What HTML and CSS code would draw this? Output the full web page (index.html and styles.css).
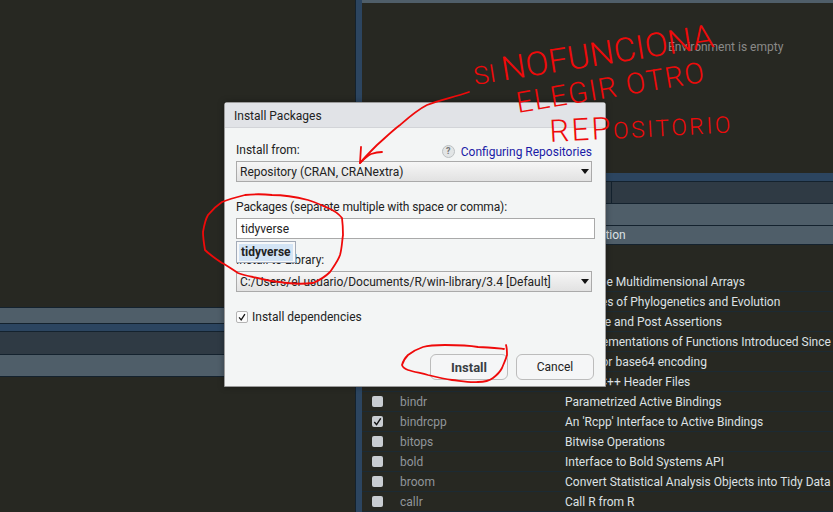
FILE: index.html
```html
<!DOCTYPE html>
<html lang="en">

<head>
    <meta charset="UTF-8">
    <title>Install Packages</title>
    <link rel="stylesheet" href="styles.css">
</head>

<body>
    <div class="left">
        <div class="left-top"></div>
        <div class="band band-a"></div>
        <div class="strip"></div>
        <div class="tabs-left"></div>
        <div class="band band-b"></div>
        <div class="left-bottom"></div>
    </div>

    <div class="divider"></div>

    <div class="right">
        <div class="top-bar"></div>
        <div class="env">Environment is empty</div>
        <div class="strip strip-right"></div>
        <div class="tabs">
            <div class="tab"></div>
        </div>
        <div class="band toolbar"></div>
        <div class="row-grid table-head">
            <span></span>
            <span>Name</span>
            <span>Description</span>
        </div>
        <div class="rows">
            <div class="row-grid row"><i class="check"></i><span class="name">abind</span><span>Combine Multidimensional Arrays</span></div>
            <div class="row-grid row"><i class="check"></i><span class="name">ape</span><span>Analyses of Phylogenetics and Evolution</span></div>
            <div class="row-grid row"><i class="check"></i><span class="name">assertthat</span><span>Easy Pre and Post Assertions</span></div>
            <div class="row-grid row"><i class="check"></i><span class="name">backports</span><span>Reimplementations of Functions Introduced Since</span></div>
            <div class="row-grid row"><i class="check"></i><span class="name">base64enc</span><span>Tools for base64 encoding</span></div>
            <div class="row-grid row"><i class="check"></i><span class="name">BH</span><span>Boost C++ Header Files</span></div>
            <div class="row-grid row"><i class="check"></i><span class="name">bindr</span><span>Parametrized Active Bindings</span></div>
            <div class="row-grid row">
                <i class="check">
                    <svg viewBox="0 0 12 12"><path d="M2.5 6.5 L5 9.5 L9.5 2.5" /></svg>
                </i>
                <span class="name">bindrcpp</span><span>An 'Rcpp' Interface to Active Bindings</span>
            </div>
            <div class="row-grid row"><i class="check"></i><span class="name">bitops</span><span>Bitwise Operations</span></div>
            <div class="row-grid row"><i class="check"></i><span class="name">bold</span><span>Interface to Bold Systems API</span></div>
            <div class="row-grid row"><i class="check"></i><span class="name">broom</span><span>Convert Statistical Analysis Objects into Tidy Data Frames</span></div>
            <div class="row-grid row"><i class="check"></i><span class="name">callr</span><span>Call R from R</span></div>
        </div>
    </div>

    <div class="dialog">
        <div class="dialog-title">Install Packages</div>
        <div class="dialog-body">
            <div class="label-row">
                <span>Install from:</span>
                <span class="help"><b class="help-icon">?</b><a href="#">Configuring Repositories</a></span>
            </div>
            <div class="select">Repository (CRAN, CRANextra)</div>

            <div class="label pkg-label">Packages (separate multiple with space or comma):</div>
            <div class="input">tidyverse</div>
            <div class="suggest"><span>tidyverse</span></div>

            <div class="label lib-label">Install to Library:</div>
            <div class="select">C:/Users/el usuario/Documents/R/win-library/3.4 [Default]</div>

            <div class="deps">
                <i class="check check-light">
                    <svg viewBox="0 0 12 12"><path d="M2.5 6.5 L5 9.5 L9.5 2.5" /></svg>
                </i>
                <span>Install dependencies</span>
            </div>

            <div class="buttons">
                <button class="btn btn-main">Install</button>
                <button class="btn">Cancel</button>
            </div>
        </div>
    </div>

    <svg class="marks" viewBox="0 0 833 512">
        <text class="hand" x="475" y="85" textLength="243" lengthAdjust="spacingAndGlyphs" transform="rotate(-9 475 85)">SI <tspan class="hand-big">NOFUNCIONA</tspan></text>
        <text class="hand hand-two" x="518" y="113" textLength="190" transform="rotate(-9.5 518 113)">ELEGIR OTRO</text>
        <text class="hand hand-three" x="550" y="142" textLength="181" transform="rotate(-3 550 142)"><tspan class="hand-rep">REP</tspan>OSITORIO</text>

        <path d="M469 92 C455 97 440 100 427 105 C417 110 408 118 400 125 C392 131 385 138 377 145 C371 151 365 157 360 163" />
        <path d="M361 147 L360 163 C364 159 367 156 371 154 C374 153 378 152 382 152" />
        <path d="M342 218 C338 213 333 210 328 208 C321 205 315 202 308 200 C296 197 284 195 272 195 C263 194 254 194 245 195 C237 197 229 199 222 202 C216 206 212 210 208 215 C205 220 204 226 203 232 C203 238 204 244 205 250 C210 255 216 259 222 263 C228 266 233 270 238 273 C243 275 248 276 253 277 C264 280 276 282 287 283 C296 284 305 284 313 283 C320 280 326 276 330 272 C334 266 338 261 340 255 C342 248 342 241 343 235 C343 231 343 226 342 218" />
        <path d="M504 349 C495 348 487 347 478 347 C467 345 456 345 445 345 C437 345 430 345 423 347 C417 349 412 352 408 355 C405 358 403 361 402 365 C403 368 405 369 408 370 C414 372 421 373 428 375 C436 377 444 379 452 380 C461 381 470 383 478 382 C484 382 489 381 493 378 C497 375 500 372 502 368 C504 363 506 359 507 355 C507 351 507 348 506 345" />
    </svg>
</body>

</html>
```
FILE: styles.css
```css
* {
    box-sizing: border-box;
    margin: 0;
    padding: 0;
}

body {
    display: flex;
    width: 833px;
    height: 512px;
    overflow: hidden;
    background-color: #272822;
    font-family: Roboto, sans-serif;
    font-size: 12px;
}

/* left side panes */
.left {
    display: flex;
    flex-direction: column;
    flex: none;
    width: 355px;
    height: 100%;
}

.left-top {
    height: 307px;
}

.band {
    background-color: #4f5e69;
    border-top: 1px solid #14222e;
}

.band-a {
    height: 16px;
}

.strip {
    height: 8px;
    background-color: #2c4560;
    border-top: 1px solid #14222e;
}

.tabs-left {
    height: 23px;
    background-color: #2f3a44;
    border-top: 1px solid #14222e;
}

.band-b {
    height: 23px;
    border-bottom: 1px solid #14222e;
}

.divider {
    flex: none;
    width: 7px;
    height: 100%;
    background-color: #2c4560;
    border-left: 1px solid #14222e;
}

/* right side */
.right {
    display: flex;
    flex-direction: column;
    flex: 1;
    min-width: 0;
    height: 100%;
    overflow: hidden;
    color: #dde1e4;
}

.top-bar {
    height: 3px;
    background-color: #4f5e69;
}

.env {
    height: 170px;
    padding: 37px 0 0 306px;
    color: #8a8a88;
}

.strip-right {
    height: 8px;
    border-top: 0;
}

.tabs {
    height: 23px;
    background-color: #2f3a44;
    border-top: 1px solid #14222e;
    border-bottom: 1px solid #14222e;
}

.tab {
    width: 250px;
    height: 100%;
    border-right: 1px solid #14222e;
}

.toolbar {
    height: 22px;
    border-top: 0;
    border-bottom: 1px solid #14222e;
}

.row-grid {
    display: grid;
    grid-template-columns: 38px 165px 1fr;
    align-items: center;
    white-space: nowrap;
}

.table-head {
    height: 19px;
    background-color: #4f5e69;
    border-bottom: 1px solid #14222e;
}

.rows {
    padding-top: 27px;
}

.row {
    height: 20px;
    border-bottom: 1px solid #1c2a33;
}

.name {
    color: #91969b;
}

.check {
    display: block;
    width: 11px;
    height: 11px;
    margin-left: 10px;
    background-color: #c9cdd2;
    border-radius: 2px;
}

.check svg {
    display: block;
    width: 11px;
    height: 11px;
}

.check path {
    fill: none;
    stroke: #111111;
    stroke-width: 1.5;
}

/* dialog */
.dialog {
    position: absolute;
    left: 224px;
    top: 102px;
    display: flex;
    flex-direction: column;
    width: 382px;
    height: 285px;
    color: #222222;
    background-color: #f3f5f5;
    border: 1px solid #9b9b9b;
    border-radius: 3px 3px 0 0;
    box-shadow: 0 0 6px rgba(0, 0, 0, 0.35);
}

.dialog-title {
    height: 25px;
    padding: 6px 0 0 9px;
    background-color: #e1e3e7;
    border-bottom: 1px solid #d2d4d8;
}

.dialog-body {
    position: relative;
    padding: 15px 13px 0 11px;
}

.label-row {
    display: flex;
    justify-content: space-between;
    height: 18px;
}

.help {
    display: flex;
    gap: 6px;
    align-items: center;
    height: 17px;
}

.help a {
    color: #1a1aa6;
    text-decoration: none;
}

.help-icon {
    width: 13px;
    height: 13px;
    color: #777777;
    font-size: 9px;
    line-height: 11px;
    text-align: center;
    background-color: #e2e5e6;
    border: 1px solid #bcc0c2;
    border-radius: 50%;
}

.select {
    display: flex;
    align-items: center;
    width: 356px;
    height: 21px;
    padding-left: 3px;
    background: linear-gradient(#f6f6f6, #e2e2e2);
    border: 1px solid #aaaaaa;
}

.select::after {
    content: "";
    position: absolute;
    right: 16px;
    border-top: 5px solid #111111;
    border-left: 4px solid transparent;
    border-right: 4px solid transparent;
}

.label {
    height: 18px;
}

.pkg-label {
    margin-top: 18px;
    letter-spacing: -0.12px;
}

.input {
    width: 359px;
    height: 21px;
    padding: 3px 0 0 4px;
    background-color: #ffffff;
    border: 1px solid #a9a9a9;
}

.suggest {
    position: absolute;
    left: 11px;
    top: 113px;
    width: 60px;
    height: 22px;
    padding: 2px;
    font-weight: bold;
    background-color: #f7f8f9;
    border: 1px solid #a3abb8;
}

.suggest span {
    display: block;
    height: 17px;
    padding-left: 2px;
    line-height: 16px;
    background-color: #d3e4f5;
}

.lib-label {
    margin-top: 14px;
}

.deps {
    display: flex;
    gap: 4px;
    align-items: center;
    height: 14px;
    margin-top: 18px;
}

.check-light {
    width: 12px;
    height: 12px;
    margin-left: 0;
    background-color: #fbfbfb;
    border: 1px solid #b4b4b4;
}

.check-light svg {
    width: 10px;
    height: 10px;
}

.buttons {
    display: flex;
    gap: 8px;
    justify-content: flex-end;
    margin: 30px -2px 0 0;
}

.btn {
    width: 78px;
    height: 26px;
    color: #222222;
    font-family: inherit;
    font-size: 12px;
    background-color: #f5f6f7;
    border: 1px solid #bcbcbc;
    border-radius: 6px;
}

.btn-main {
    color: #3a3f44;
    font-size: 13px;
    font-weight: bold;
}

/* red marker drawn on top of the screenshot */
.marks {
    position: absolute;
    left: 0;
    top: 0;
    width: 833px;
    height: 512px;
    pointer-events: none;
}

.marks path {
    fill: none;
    stroke: #ef0a0a;
    stroke-width: 1.8;
    stroke-linecap: round;
    stroke-linejoin: round;
}

.hand {
    fill: #ef0a0a;
    font-family: Roboto, sans-serif;
    font-size: 25px;
    font-weight: 300;
}

.hand-big {
    font-size: 33px;
}

.hand-two {
    font-size: 29px;
}

.hand-three {
    font-size: 23px;
}

.hand-rep {
    font-size: 31px;
}
```
